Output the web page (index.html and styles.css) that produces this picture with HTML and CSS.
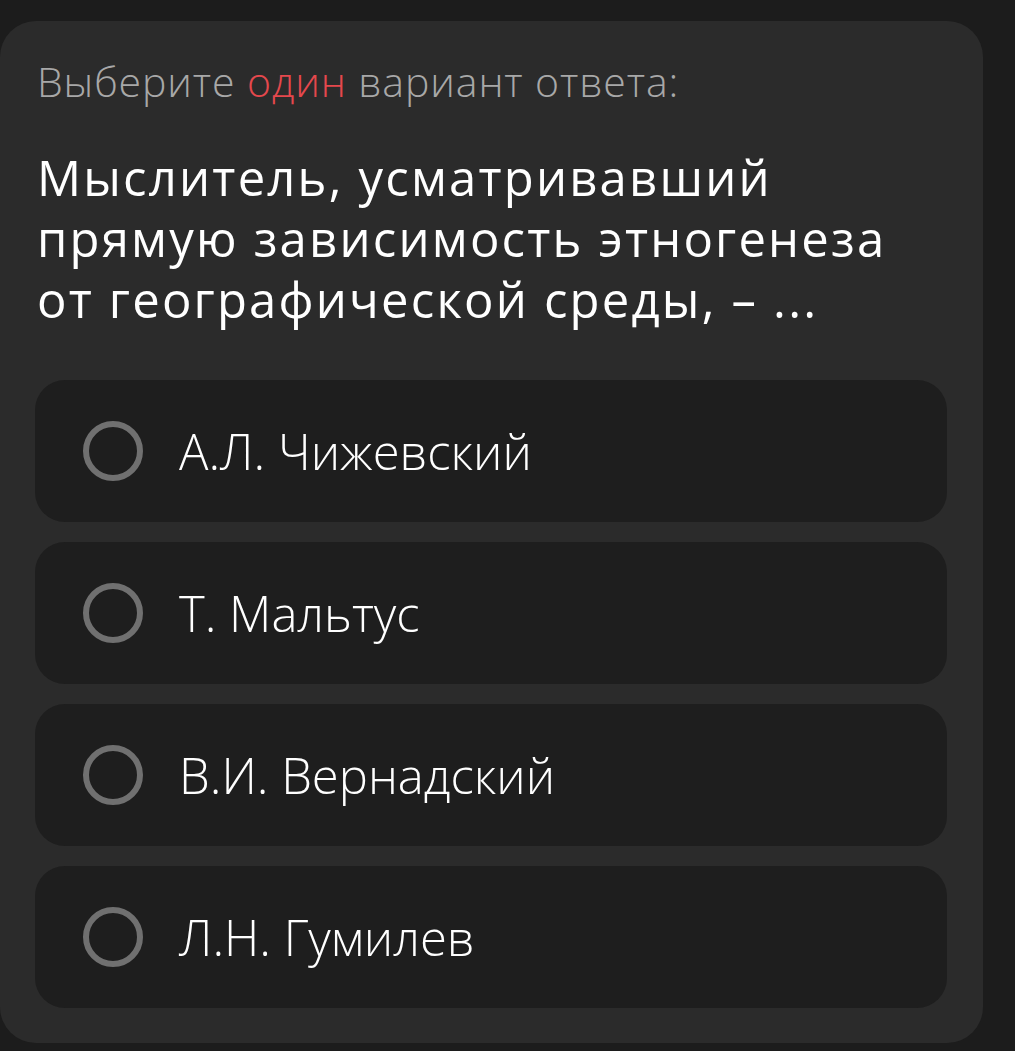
FILE: index.html
```html
<!DOCTYPE html>
<html>
<head>
    <title>Тест</title>
    <link rel="stylesheet" href="styles.css">
</head>
<body>
    <div class="quiz-card">
        <div class="quiz-hint">Выберите <span class="quiz-hint-accent">один</span> вариант ответа:</div>
        <div class="quiz-question">Мыслитель, усматривавший прямую зависимость этногенеза от географической среды, – ...</div>
        <div class="answer-list">
            <div class="answer-item">
                <div class="answer-radio"></div>
                <span class="answer-text">А.Л. Чижевский</span>
            </div>
            <div class="answer-item">
                <div class="answer-radio"></div>
                <span class="answer-text">Т. Мальтус</span>
            </div>
            <div class="answer-item">
                <div class="answer-radio"></div>
                <span class="answer-text">В.И. Вернадский</span>
            </div>
            <div class="answer-item">
                <div class="answer-radio"></div>
                <span class="answer-text">Л.Н. Гумилев</span>
            </div>
        </div>
    </div>
</body>
</html>
```

FILE: styles.css
```css
body {
    font-family: 'Open Sans', 'Noto Sans', sans-serif;
    background-color: #1c1c1c;
    color: white;
    margin: 0;
    padding: 21px 0 0 0;
    overflow: hidden;
}

.quiz-card {
    width: 983px;
    height: 1022px;
    box-sizing: border-box;
    background-color: #2b2b2b;
    border-radius: 36px;
    padding: 35px 36px 0 37px;
}

.quiz-hint {
    font-size: 41px;
    font-weight: 300;
    color: #a8a8a8;
    line-height: 50px;
    letter-spacing: 0.9px;
}

.quiz-hint-accent {
    color: #e5484d;
}

.quiz-question {
    margin-top: 41px;
    font-size: 49px;
    font-weight: 500;
    line-height: 61px;
    letter-spacing: 2.2px;
    color: white;
}

.answer-list {
    display: flex;
    flex-direction: column;
    gap: 20px;
    margin-top: 50px;
    margin-left: -2px;
}

.answer-item {
    display: flex;
    align-items: center;
    gap: 36px;
    height: 142px;
    padding-left: 48px;
    border-radius: 30px;
    background-color: #1e1e1e;
}

.answer-radio {
    width: 48px;
    height: 48px;
    border: 6px solid #707070;
    border-radius: 50%;
    flex-shrink: 0;
}

.answer-text {
    font-size: 49px;
    font-weight: 300;
    color: white;
}
```
